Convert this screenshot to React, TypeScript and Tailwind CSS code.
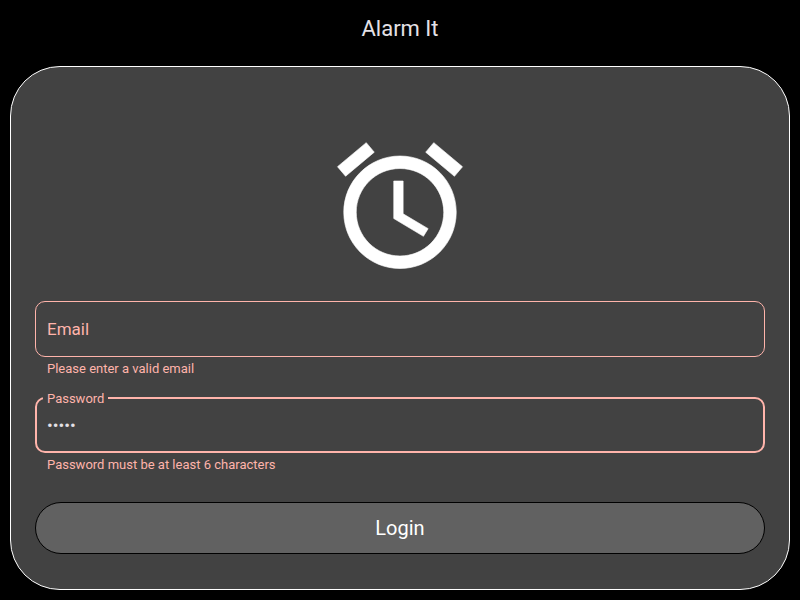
import { useState } from "react";

function AlarmIcon() {
  return (
    <svg
      viewBox="0 0 24 24"
      className="size-[150px] fill-white stroke-white"
      strokeWidth="0.1"
      aria-hidden="true"
    >
      <path d="M22 5.72l-4.6-3.86-1.29 1.53 4.6 3.86L22 5.72zM7.88 3.39L6.6 1.86 2 5.71l1.29 1.53 4.59-3.85zM12.5 8H11v6l4.75 2.85.75-1.23-4-2.37V8zM12 4c-4.97 0-9 4.03-9 9s4.02 9 9 9c4.97 0 9-4.03 9-9s-4.03-9-9-9zm0 16c-3.87 0-7-3.13-7-7s3.13-7 7-7 7 3.13 7 7-3.13 7-7 7z" />
    </svg>
  );
}

export default function App() {
  const [email, setEmail] = useState("");
  const [password, setPassword] = useState("abcde");

  return (
    <div className="flex min-h-screen flex-col bg-black font-[Roboto,sans-serif] text-[#e4e1e6]">
      <header className="flex h-14 items-center justify-center pt-0.5">
        <h1 className="text-[22px] leading-7">Alarm It</h1>
      </header>
      <main className="m-2.5 flex grow flex-col rounded-[50px] border border-white bg-[#424242] px-6 pt-16 pb-8">
        <div className="flex justify-center">
          <AlarmIcon />
        </div>
        <form className="mt-5 flex flex-col" noValidate onSubmit={(e) => e.preventDefault()}>
          <div className="relative">
            <input
              id="email"
              type="email"
              value={email}
              onChange={(e) => setEmail(e.target.value)}
              aria-invalid="true"
              aria-describedby="email-error"
              className="block h-14 w-full rounded-[10px] border border-[#ffb4ab] bg-transparent px-3 text-[17px] outline-none"
            />
            {email === "" && (
              <label htmlFor="email" className="absolute inset-y-0 left-3 flex items-center pt-0.5 text-[17px] text-[#ffb4ab]">
                Email
              </label>
            )}
          </div>
          <p id="email-error" className="mt-1 px-3 text-[13px] leading-4 text-[#ffb4ab]">
            Please enter a valid email
          </p>
          <div className="relative mt-5">
            <input
              id="password"
              type="password"
              value={password}
              onChange={(e) => setPassword(e.target.value)}
              aria-invalid="true"
              aria-describedby="password-error"
              className="block h-14 w-full rounded-[10px] border-2 border-[#ffb4ab] bg-transparent px-2.5 text-[17px] outline-none"
            />
            <label
              htmlFor="password"
              className="absolute -top-1.5 left-2 bg-[#424242] px-1 text-[13px] leading-4 text-[#ffb4ab]"
            >
              Password
            </label>
          </div>
          <p id="password-error" className="mt-1 px-3 text-[13px] leading-4 text-[#ffb4ab]">
            Password must be at least 6 characters
          </p>
          <button
            type="submit"
            className="mt-[29px] h-[52px] rounded-full border border-black bg-[#616161] text-xl text-white"
          >
            Login
          </button>
        </form>
      </main>
    </div>
  );
}
